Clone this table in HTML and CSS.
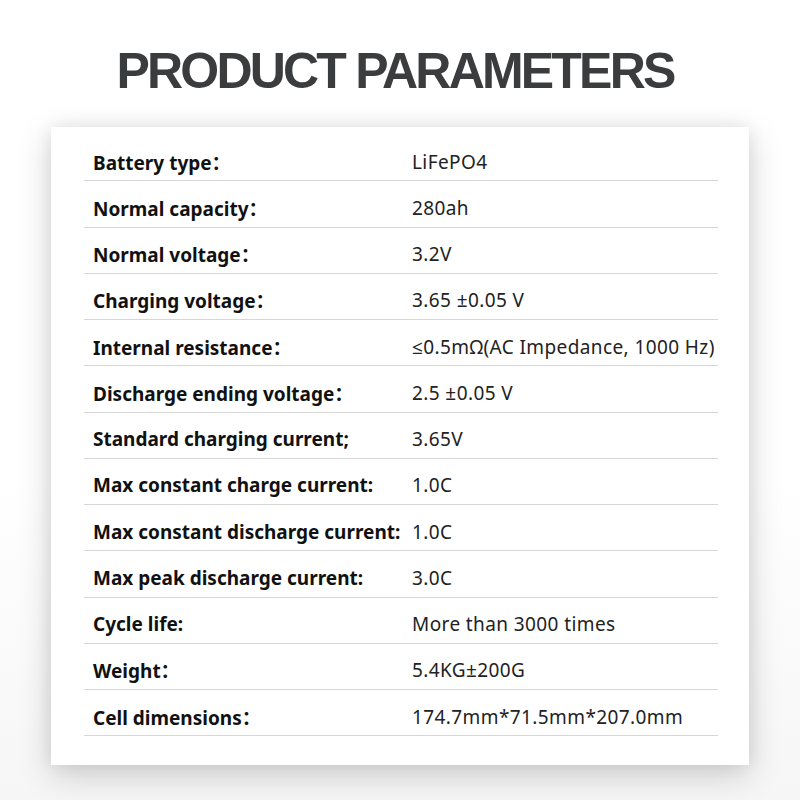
FILE: index.html
```html
<!DOCTYPE html>
<html lang="en">
<head>
<meta charset="utf-8">
<title>Product Parameters</title>
<link rel="stylesheet" href="styles.css">
</head>
<body>
<main class="page">
  <h1 class="title">PRODUCT PARAMETERS</h1>
  <section class="card">
    <div class="row"><span class="label">Battery type：</span><span class="value">LiFePO4</span></div>
    <div class="row"><span class="label">Normal capacity：</span><span class="value">280ah</span></div>
    <div class="row"><span class="label">Normal voltage：</span><span class="value">3.2V</span></div>
    <div class="row"><span class="label">Charging voltage：</span><span class="value">3.65 ±0.05 V</span></div>
    <div class="row"><span class="label">Internal resistance：</span><span class="value">≤0.5mΩ(AC Impedance, 1000 Hz)</span></div>
    <div class="row"><span class="label">Discharge ending voltage：</span><span class="value">2.5 ±0.05 V</span></div>
    <div class="row"><span class="label">Standard charging current;</span><span class="value">3.65V</span></div>
    <div class="row"><span class="label">Max constant charge current:</span><span class="value">1.0C</span></div>
    <div class="row"><span class="label">Max constant discharge current:</span><span class="value">1.0C</span></div>
    <div class="row"><span class="label">Max peak discharge current:</span><span class="value">3.0C</span></div>
    <div class="row"><span class="label">Cycle life:</span><span class="value">More than 3000 times</span></div>
    <div class="row"><span class="label">Weight：</span><span class="value">5.4KG±200G</span></div>
    <div class="row"><span class="label">Cell dimensions：</span><span class="value">174.7mm*71.5mm*207.0mm</span></div>
  </section>
</main>
</body>
</html>
```

FILE: styles.css
```css
html, body {
  margin: 0;
  padding: 0;
}
body {
  width: 800px;
  height: 800px;
  overflow: hidden;
  background: linear-gradient(#ffffff 0%, #ffffff 60%, #f6f6f6 100%);
}
.page {
  display: flex;
  flex-direction: column;
  align-items: center;
  padding-top: 46px;
}
.title {
  margin: 0 10px 31px 0;
  font-family: "Liberation Sans", Arial, sans-serif;
  font-weight: 700;
  font-size: 50px;
  line-height: 50px;
  letter-spacing: -2.8px;
  color: #3a3c3d;
}
.card {
  width: 698px;
  box-sizing: border-box;
  background: #ffffff;
  padding: 8px 31px 29px 33px;
  box-shadow: 0 10px 32px rgba(0, 0, 0, 0.18), 0 0 16px rgba(0, 0, 0, 0.07);
  display: flex;
  flex-direction: column;
}
.row {
  height: 46.25px;
  box-sizing: border-box;
  border-bottom: 1px solid #d6d6d6;
  display: flex;
  align-items: center;
  padding: 8px 0 0 9px;
  font-family: "Noto Sans", "Open Sans", "Noto Sans CJK SC", sans-serif;
  font-size: 19px;
  color: #1a1a1a;
}
.label {
  width: 319px;
  flex: none;
  font-weight: 700;
  color: #111111;
}
.value {
  font-weight: 400;
  color: #222222;
  letter-spacing: 0.4px;
  white-space: nowrap;
}
```
